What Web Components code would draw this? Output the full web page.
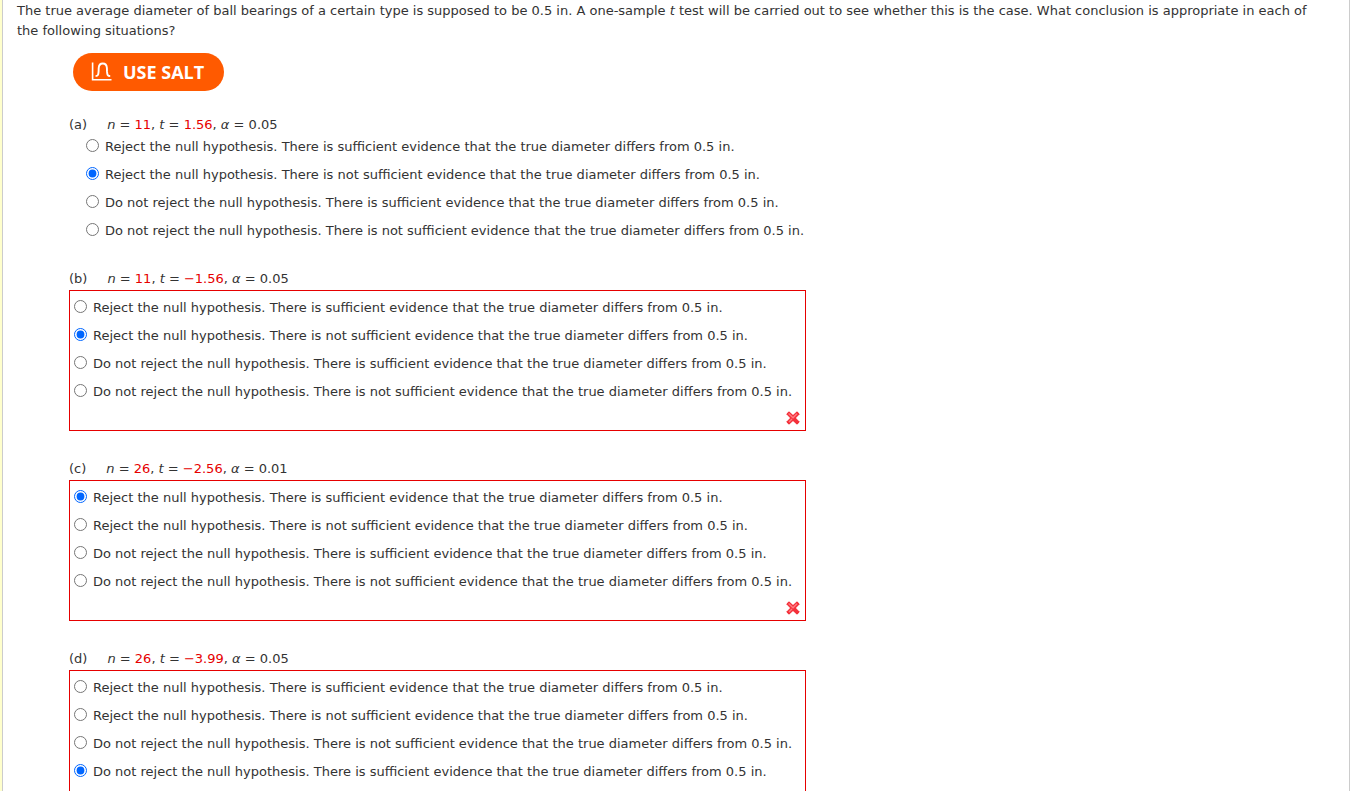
<!DOCTYPE html>
<html lang="en">
<head>
<meta charset="utf-8">
<meta name="viewport" content="width=device-width, initial-scale=1">
<title>One-sample t test</title>
<style>
  body { margin: 0; background: #fff; color: #333; font: 13px/20px Verdana, "DejaVu Sans", sans-serif; }
</style>
</head>
<body>
<question-page>
  <span slot="prompt">The true average diameter of ball bearings of a certain type is supposed to be 0.5 in. A one-sample <i>t</i> test will be carried out to see whether this is the case. What conclusion is appropriate in each of the following situations?</span>
  <salt-button>USE SALT</salt-button>
  <question-part letter="a" n="11" t="1.56" alpha="0.05" order="0 1 2 3" chosen="1"></question-part>
  <question-part letter="b" n="11" t="−1.56" alpha="0.05" order="0 1 2 3" chosen="1" wrong></question-part>
  <question-part letter="c" n="26" t="−2.56" alpha="0.01" order="0 1 2 3" chosen="0" wrong></question-part>
  <question-part letter="d" n="26" t="−3.99" alpha="0.05" order="0 1 3 2" chosen="3" wrong></question-part>
</question-page>

<template id="page-template">
  <style>
    :host { display: block; box-sizing: border-box; height: 100vh; overflow: hidden; padding: 0 5px 0 2px; background: linear-gradient(to right, #ffffcc 2px, #fff 2px); }
    main { box-sizing: border-box; min-height: 100vh; border: solid #ccc; border-width: 0 1px; padding: 1px 24px 0 14px; }
    p { margin: 0 0 12px; }
    .work { padding-left: 52px; }
  </style>
  <main>
    <p><slot name="prompt"></slot></p>
    <div class="work"><slot></slot></div>
  </main>
</template>

<template id="salt-template">
  <style>
    :host { display: block; margin: 0 0 26px 4px; }
    button { display: flex; align-items: center; gap: 11px; height: 38px; padding: 0 20px 0 18px; border: 0; border-radius: 19px; background: #ff5a00; color: #fff; font: bold 18px/20px "Open Sans", sans-serif; cursor: pointer; }
    svg { display: block; margin-bottom: 2px; }
  </style>
  <button type="button">
    <svg width="21" height="19" viewBox="0 0 21 19" fill="none" stroke="#fff" aria-hidden="true">
      <path d="M1.6 .5V17.7H20.5" stroke-width="1.6"/>
      <path d="M4.6 14C7.2 14 7.4 12.6 7.6 9.4L7.7 6C7.9 3 9.2 1.5 11.8 1.5S15.7 3 15.9 6L16 9.4C16.2 12.6 16.5 14 19.2 14" stroke-width="1.9"/>
    </svg>
    <slot></slot>
  </button>
</template>

<template id="option-template">
  <style>
    :host { display: block; }
    label { display: flex; align-items: center; gap: 6px; height: 28px; white-space: nowrap; }
    input { flex: none; width: 13px; height: 13px; margin: 0 0 3px; accent-color: #0066ff; }
  </style>
  <label><input type="radio"><slot></slot></label>
</template>

<template id="part-template">
  <style>
    :host { display: block; margin-bottom: 26px; }
    :host([wrong]) { margin-bottom: 30px; }
    header { display: flex; gap: 20px; line-height: 16px; }
    b { font-weight: normal; color: #e60000; }
    .answers { width: fit-content; padding-left: 17px; }
    :host([wrong]) .answers { margin-top: 3px; padding: 3px 13px 0 4px; border: 1px solid #e60000; }
    .mark { display: none; }
    :host([wrong]) .mark { display: flex; justify-content: flex-end; align-items: center; height: 24px; margin-right: -8px; }
  </style>
  <header><span class="letter"></span><span><i>n</i> = <b class="n"></b>, <i>t</i> = <b class="t"></b>, <i>α</i> = <span class="alpha"></span></span></header>
  <div class="answers" role="radiogroup">
    <div class="options"></div>
    <div class="mark">
      <svg width="14" height="14" viewBox="0 0 14 14" role="img" aria-label="Incorrect">
        <path d="M3 .8L7 4.5 11 .8 13.3 3 9.4 7 13.3 11 11 13.2 7 9.5 3 13.2.7 11 4.6 7 .7 3Z" fill="#f5303a" stroke="#f0141e" stroke-width=".8" stroke-linejoin="round"/>
        <path d="M2.6 2.6L7 6.8 11 2.8M3 11L6 8" fill="none" stroke="#ff7a80" stroke-width="1.4"/>
      </svg>
    </div>
  </div>
</template>

<script>
  const CONCLUSIONS = [
    "Reject the null hypothesis. There is sufficient evidence that the true diameter differs from 0.5 in.",
    "Reject the null hypothesis. There is not sufficient evidence that the true diameter differs from 0.5 in.",
    "Do not reject the null hypothesis. There is sufficient evidence that the true diameter differs from 0.5 in.",
    "Do not reject the null hypothesis. There is not sufficient evidence that the true diameter differs from 0.5 in."
  ];

  class TemplateElement extends HTMLElement {
    constructor() {
      super();
      this.attachShadow({ mode: "open" })
        .append(document.getElementById(this.constructor.template).content.cloneNode(true));
    }
  }

  class QuestionPage extends TemplateElement { static template = "page-template"; }
  class SaltButton extends TemplateElement { static template = "salt-template"; }

  class AnswerOption extends TemplateElement {
    static template = "option-template";
    get input() { return this.shadowRoot.querySelector("input"); }
    connectedCallback() {
      this.input.checked = this.hasAttribute("checked");
      this.input.addEventListener("change", () =>
        this.dispatchEvent(new CustomEvent("pick", { bubbles: true })));
    }
  }

  class QuestionPart extends TemplateElement {
    static template = "part-template";
    connectedCallback() {
      const root = this.shadowRoot;
      root.querySelector(".letter").textContent = `(${this.getAttribute("letter")})`;
      for (const name of ["n", "t", "alpha"]) {
        root.querySelector("." + name).textContent = this.getAttribute(name);
      }
      root.querySelector(".answers").setAttribute("aria-label", `Part ${this.getAttribute("letter")}`);
      const list = root.querySelector(".options");
      this.getAttribute("order").split(" ").forEach((key, index) => {
        const option = document.createElement("answer-option");
        option.textContent = CONCLUSIONS[key];
        option.toggleAttribute("checked", index === Number(this.getAttribute("chosen")));
        list.append(option);
      });
      list.addEventListener("pick", event => {
        for (const option of list.children) option.input.checked = option === event.target;
      });
    }
  }

  customElements.define("question-page", QuestionPage);
  customElements.define("salt-button", SaltButton);
  customElements.define("answer-option", AnswerOption);
  customElements.define("question-part", QuestionPart);
</script>
</body>
</html>
